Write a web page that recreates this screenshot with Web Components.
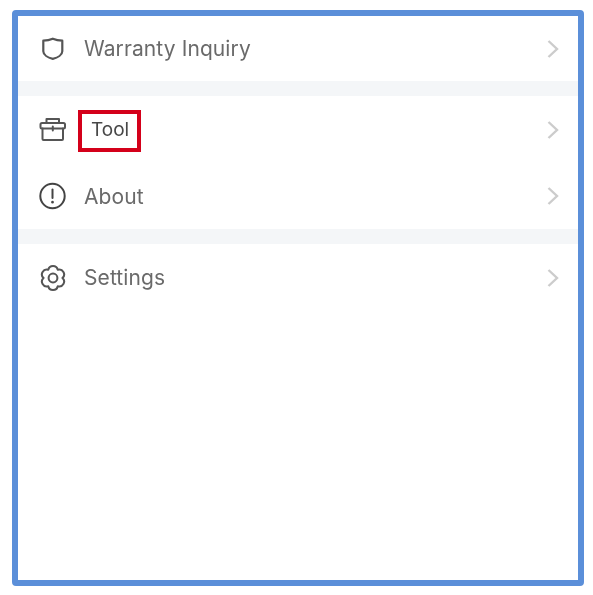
<!DOCTYPE html>
<html>
<head>
<meta charset="utf-8">
<title>Menu</title>
<style>
    html, body { margin: 0; background: #fff; }
    body { font-family: "Inter", "Liberation Sans", sans-serif; }
</style>
</head>
<body>
<app-frame>
    <menu-group>
        <menu-row height="65">
            <svg slot="icon" width="28" height="28" viewBox="0 0 28 28" fill="none" stroke="#555" stroke-width="2.200" stroke-linejoin="round"><path d="M13.800 3.700c3 1.300 6 1.900 9.500 2v10.500c0 3.600-4.600 6.500-9.500 7.700-4.900-1.200-9.500-4.100-9.500-7.700V5.700c3.500-.1 6.500-.7 9.500-2z"/></svg>
            Warranty Inquiry
        </menu-row>
    </menu-group>
    <menu-group>
        <menu-row height="67">
            <svg slot="icon" width="28" height="28" viewBox="0 0 28 28" fill="none" stroke="#555" stroke-width="2" stroke-linejoin="round" stroke-linecap="round"><path d="M7.500 7V3h12.500v4"/><rect x="1.500" y="7" width="24.500" height="5.500" rx="1.500"/><path d="M3.500 12.500V23a1 1 0 0 0 1 1h18.500a1 1 0 0 0 1-1V12.500M13.800 10.500v4"/></svg>
            <tool-highlight>Tool</tool-highlight>
        </menu-row>
        <menu-row height="66">
            <svg slot="icon" width="28" height="28" viewBox="0 0 28 28" fill="none" stroke="#444" stroke-width="2" stroke-linecap="round"><circle cx="13.500" cy="14" r="12.200"/><path d="M13.500 7.500v8.500"/><path d="M13.500 20v.3" stroke-width="2.600"/></svg>
            About
        </menu-row>
    </menu-group>
    <menu-group>
        <menu-row height="67">
            <svg slot="icon" width="28" height="28" viewBox="1.070 1.270 25.450 25.450" fill="none" stroke="#555" stroke-width="1.850" stroke-linejoin="round"><path d="M9.500 6.550A4.400 4.400 0 0 1 18.100 6.550 4.400 4.400 0 0 1 22.400 14 4.400 4.400 0 0 1 18.100 21.450 4.400 4.400 0 0 1 9.500 21.450 4.400 4.400 0 0 1 5.200 14 4.400 4.400 0 0 1 9.500 6.550z"/><circle cx="13.800" cy="14" r="4"/></svg>
            Settings
        </menu-row>
    </menu-group>
</app-frame>

<script>
class AppFrame extends HTMLElement {
    constructor() {
        super();
        this.attachShadow({ mode: 'open' });
        this.shadowRoot.innerHTML = `
            <style>
                :host {
                    display: block;
                    box-sizing: border-box;
                    width: 572px;
                    height: 576px;
                    margin: 10px 0 0 12px;
                    border: 6px solid #5b8fd9;
                    border-radius: 4px;
                    background: #fff;
                }
            </style>
            <slot></slot>
        `;
    }
}

class MenuGroup extends HTMLElement {
    constructor() {
        super();
        this.attachShadow({ mode: 'open' });
        this.shadowRoot.innerHTML = `
            <style>
                :host {
                    display: block;
                    background: #fff;
                    border-bottom: 15px solid #f4f6f8;
                }
                :host(:last-child) { border-bottom: 0; }
            </style>
            <slot></slot>
        `;
    }
}

class MenuRow extends HTMLElement {
    constructor() {
        super();
        this.attachShadow({ mode: 'open' });
    }

    connectedCallback() {
        const height = this.getAttribute('height') || 66;
        this.shadowRoot.innerHTML = `
            <style>
                :host {
                    display: flex;
                    align-items: center;
                    height: ${height}px;
                    padding: 0 18px 0 21px;
                    font-family: "Inter", "Liberation Sans", sans-serif;
                    font-size: 21px;
                    letter-spacing: 0.1px;
                    color: #6a6a6a;
                }
                .icon {
                    display: flex;
                    width: 28px;
                    height: 28px;
                    margin-right: 17px;
                    filter: blur(0.4px);
                }
                .label {
                    flex: 1;
                    filter: blur(0.4px);
                }
                .chevron {
                    display: block;
                    filter: blur(0.5px);
                }
            </style>
            <span class="icon"><slot name="icon"></slot></span>
            <span class="label"><slot></slot></span>
            <svg class="chevron" width="14" height="20" viewBox="0 0 14 20" fill="none" stroke="#cccccc" stroke-width="2.400"><path d="M2.500 2l8.500 8-8.500 8"/></svg>
        `;
    }
}

class ToolHighlight extends HTMLElement {
    constructor() {
        super();
        this.attachShadow({ mode: 'open' });
        this.shadowRoot.innerHTML = `
            <style>
                :host {
                    display: inline-flex;
                    align-items: center;
                    box-sizing: border-box;
                    width: 63px;
                    height: 42px;
                    margin: 3px 0 0 -6px;
                    padding: 0 0 4px 9px;
                    border: 4px solid #d4001a;
                    font-size: 19px;
                    letter-spacing: 0;
                    color: #484848;
                    vertical-align: middle;
                }
            </style>
            <slot></slot>
        `;
    }
}

customElements.define('app-frame', AppFrame);
customElements.define('menu-group', MenuGroup);
customElements.define('menu-row', MenuRow);
customElements.define('tool-highlight', ToolHighlight);
</script>
</body>
</html>
